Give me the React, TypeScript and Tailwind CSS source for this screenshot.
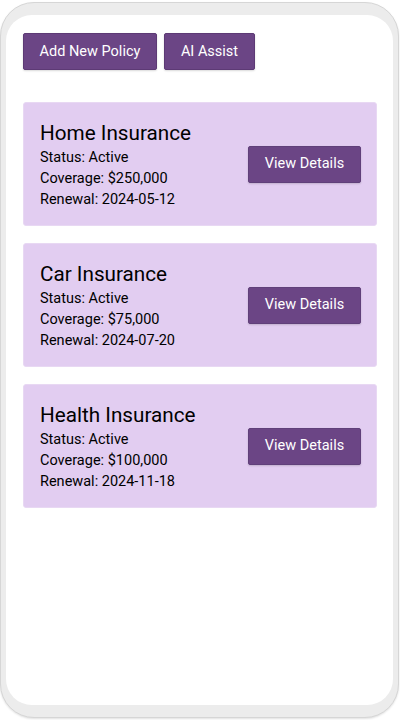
const policies = [
  { name: "Home Insurance", coverage: "$250,000", renewal: "2024-05-12" },
  { name: "Car Insurance", coverage: "$75,000", renewal: "2024-07-20" },
  { name: "Health Insurance", coverage: "$100,000", renewal: "2024-11-18" },
];

const btn =
  "h-[37px] rounded-[2px] bg-[#6b4585] border border-[#5d3a75] text-white text-[14.5px] shadow-[0_1px_2px_rgba(0,0,0,0.15)]";

export default function App() {
  return (
    <div className="w-[400px] h-[720px] bg-white pt-[2px] font-['Roboto',sans-serif]">
      <div className="h-[716px] w-[399px] rounded-[34px] bg-[#ececec] border border-[#d6d6d6] shadow-[0_1px_2px_rgba(0,0,0,0.12)] px-[5px] pt-[12px] pb-[12px]">
        <div className="h-full rounded-[26px] bg-white pl-[17px] pr-[16px] pt-[18px]">
          <div className="flex gap-[7px]">
            <button className={`${btn} w-[134px]`}>Add New Policy</button>
            <button className={`${btn} w-[91px]`}>AI Assist</button>
          </div>

          <div className="mt-[32px] flex flex-col gap-[17px]">
            {policies.map((p) => (
              <div
                key={p.name}
                className="h-[124px] rounded-[3px] bg-[#e2cdf1] border border-[#e8d8f3] pl-[16px] pr-[15px] flex items-center justify-between"
              >
                <div className="text-black">
                  <div className="text-[20.7px] leading-[28px]">{p.name}</div>
                  <div className="text-[14.5px] leading-[21px]">Status: Active</div>
                  <div className="text-[14.5px] leading-[21px]">Coverage: {p.coverage}</div>
                  <div className="text-[14.5px] leading-[21px]">Renewal: {p.renewal}</div>
                </div>
                <button className={`${btn} w-[113px] border-[#60407a]`}>View Details</button>
              </div>
            ))}
          </div>
        </div>
      </div>
    </div>
  );
}
